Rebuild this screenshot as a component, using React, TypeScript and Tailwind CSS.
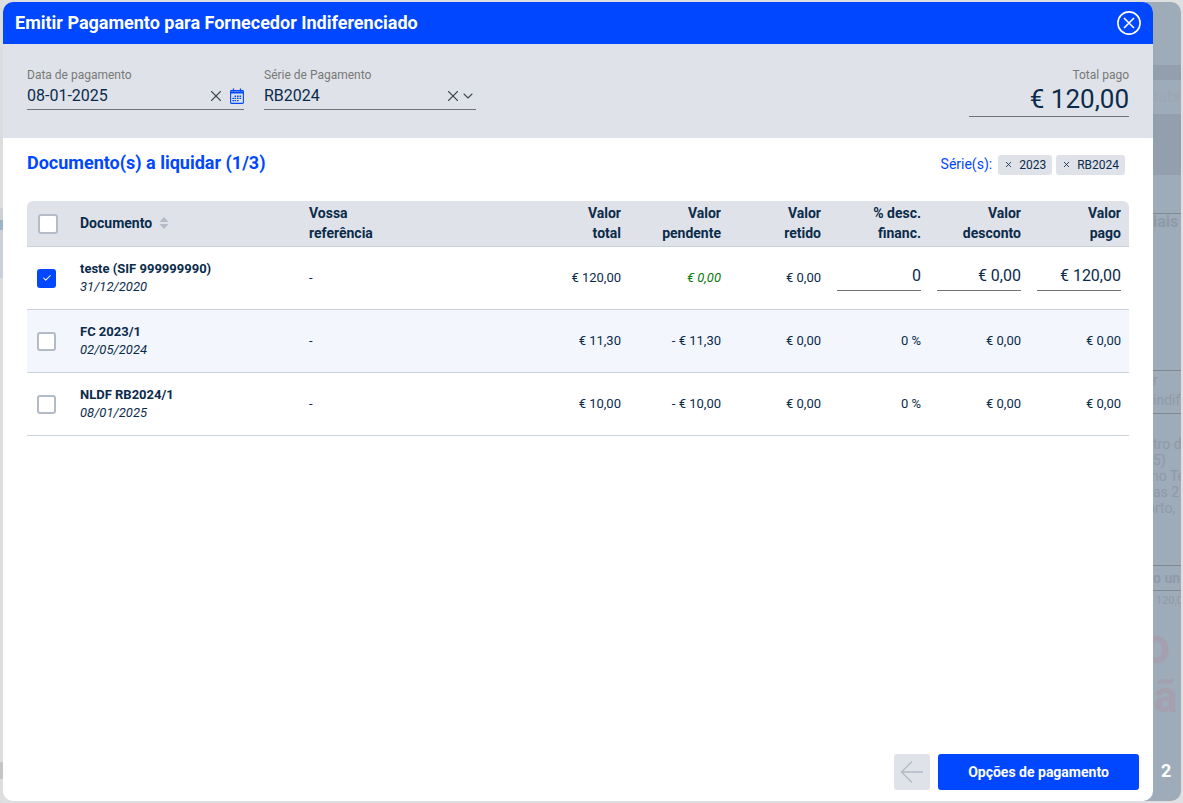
import { Check, ChevronDown, X } from 'lucide-react';

const rows = [
  { doc: 'teste (SIF 999999990)', date: '31/12/2020', total: '€ 120,00', pendente: '€ 0,00', retido: '€ 0,00', desc: '0', descVal: '€ 0,00', pago: '€ 120,00', active: true },
  { doc: 'FC 2023/1', date: '02/05/2024', total: '€ 11,30', pendente: '- € 11,30', retido: '€ 0,00', desc: '0 %', descVal: '€ 0,00', pago: '€ 0,00', active: false },
  { doc: 'NLDF RB2024/1', date: '08/01/2025', total: '€ 10,00', pendente: '- € 10,00', retido: '€ 0,00', desc: '0 %', descVal: '€ 0,00', pago: '€ 0,00', active: false },
];

const gridCols = 'grid grid-cols-[53px_229px_220px_100px_100px_100px_100px_100px_100px]';

function CalendarIcon() {
  return (
    <svg width="14" height="16" viewBox="0 0 14 16" fill="none" stroke="#0047ff" strokeWidth="1.1">
      <rect x="0.6" y="2.6" width="12.8" height="12.8" rx="0.8" />
      <path d="M0.6 4.6h12.8" strokeWidth="2" />
      <path d="M3.5 .6v3M10.5 .6v3" strokeWidth="1.3" />
      <path d="M4.5 8.2h1.6M7 8.2h1.6M9.5 8.2h1.6M2.4 10.4h1.6M4.5 10.4h1.6M7 10.4h1.6M9.5 10.4h1.6M2.4 12.6h1.6M4.5 12.6h1.6M7 12.6h1.6" strokeWidth="1.4" />
    </svg>
  );
}

function SortIcon() {
  return (
    <svg width="10" height="12" viewBox="0 0 10 12" fill="#b4bac6">
      <path d="M5 0l4.5 5H.5zM5 12L.5 7h9z" />
    </svg>
  );
}

function CloseIcon() {
  return (
    <svg width="24" height="24" viewBox="0 0 24 24" fill="none" stroke="#ffffff" strokeWidth="1.6">
      <circle cx="12" cy="12" r="11.1" />
      <path d="M7 7l10 10M17 7L7 17" />
    </svg>
  );
}

function Field({ label, value, width, children }: { label: string; value: string; width: string; children: React.ReactNode }) {
  return (
    <div className={`flex flex-col ${width}`}>
      <span className="text-[12px] leading-[14px] text-[#787878]">{label}</span>
      <div className="mt-[3px] flex h-[25px] items-center justify-between border-b border-[#6f7479] pb-[2px] text-[16px] text-[#0b2b4b]">
        <span>{value}</span>
        <span className="flex items-center gap-[1px]">{children}</span>
      </div>
    </div>
  );
}

function Chip({ label }: { label: string }) {
  return (
    <span className="flex h-[20px] items-center gap-[6px] rounded-[3px] bg-[#dfe3e9] px-[6px] text-[12px] text-[#0b2b4b]">
      <X size={9} strokeWidth={2.2} />
      {label}
    </span>
  );
}

function Money({ value }: { value: string }) {
  return (
    <div className="flex h-[27px] w-[84px] items-center justify-end border-b border-[#6f7479] pb-[1px] text-[16px] text-[#0b2b4b]">
      {value}
    </div>
  );
}

function HeadCell({ children }: { children: React.ReactNode }) {
  return <div className="flex items-center justify-end pb-[2px] pr-[8px] text-right">{children}</div>;
}

function NumCell({ children, className = '' }: { children: React.ReactNode; className?: string }) {
  return <div className={`flex items-center justify-end pr-[8px] ${className}`}>{children}</div>;
}

function Box({ checked, head }: { checked?: boolean; head?: boolean }) {
  if (checked) {
    return (
      <span className="flex h-[19px] w-[19px] items-center justify-center rounded-[3px] bg-[#0047ff] text-white">
        <Check size={10} strokeWidth={2.5} />
      </span>
    );
  }
  return <span className={`rounded-[3px] border-2 border-[#b3bbc6] bg-white ${head ? 'h-[20px] w-[20px]' : 'h-[19px] w-[19px]'}`} />;
}

// Faint page behind the dimmed overlay, on the right of the modal
function BehindStrip() {
  return (
    <div className="z-0 -ml-[12px] mt-[2px] flex h-[799px] w-[40px] flex-col overflow-hidden rounded-r-[10px] bg-[#9eabb8] pl-[12px] font-['Roboto',sans-serif] text-[14px] whitespace-nowrap text-[#8e9aa8]">
      <div className="mt-[63px] h-[15px] shrink-0 bg-[#939fad]" />
      <div className="flex h-[34px] shrink-0 items-center text-[16px] text-[#9aa7b4]">tabili</div>
      <div className="h-[61px] shrink-0 bg-[#939fad]" />
      <div className="mt-[38px] h-[1px] shrink-0 bg-[#7f8995]" />
      <div className="h-[16px] shrink-0 text-[16px] font-bold leading-[16px]">iais</div>
      <div className="mt-[140px] h-[1px] shrink-0 bg-[#7f8995]" />
      <div className="h-[19px] shrink-0 leading-[19px]">r</div>
      <div className="h-[23px] shrink-0 leading-[21px] text-[#8e9aa8]">indife</div>
      <div className="h-[1px] shrink-0 bg-[#7f8995]" />
      <div className="mt-[22px] flex shrink-0 flex-col text-[14px] leading-[16px]">
        <span>tro de</span>
        <span>5)</span>
        <span className="-ml-[2px]">no Te</span>
        <span>as 2</span>
        <span className="-ml-[6px]">orto,</span>
      </div>
      <div className="mt-[49px] h-[1px] shrink-0 bg-[#7f8995]" />
      <div className="h-[24px] shrink-0 text-[14px] font-bold leading-[24px]">o un</div>
      <div className="h-[1px] shrink-0 bg-[#7f8995]" />
      <div className="h-[20px] shrink-0 pl-[3px] text-[11px] leading-[20px]">120,0</div>
      <div className="flex h-[120px] shrink-0 flex-col font-bold text-[#a5a0ae]">
        <span className="-ml-[11px] mt-[10px] text-[50px] leading-[50px]">o</span>
        <span className="pl-[1px] text-[44px] leading-[52px]">ã</span>
      </div>
      <div className="mt-[30px] pl-[8px] text-[18px] font-bold leading-[20px] text-white">2</div>
    </div>
  );
}

export default function App() {
  return (
    <div className="flex h-[803px] w-[1183px] overflow-hidden bg-[#dedfe0] font-['Roboto',sans-serif]">
      {/* left sliver of the page behind */}
      <div className="flex h-full w-[3px] shrink-0 flex-col bg-[#dcdddf]">
        <div className="mt-[208px] h-[12px] bg-[#cdd0d4]" />
        <div className="h-[10px] bg-[#9db3c6]" />
        <div className="h-[12px] bg-[#cdd0d4]" />
        <div className="h-[36px] bg-[#c7d0de]" />
        <div className="mt-[484px] h-[17px] bg-[#c4c5c6]" />
      </div>

      <div className="z-10 mt-[2px] flex h-[799px] w-[1150px] shrink-0 flex-col overflow-hidden rounded-[10px] bg-white">
        <header className="flex h-[42px] shrink-0 items-center justify-between bg-[#0047ff] pl-[12px] pr-[12px] text-white">
          <h1 className="pb-[2px] text-[18px] font-bold">Emitir Pagamento para Fornecedor Indiferenciado</h1>
          <CloseIcon />
        </header>

        <div className="flex h-[94px] shrink-0 items-start bg-[#dfe3e9] pl-[24px] pr-[24px] pt-[24px]">
          <Field label="Data de pagamento" value="08-01-2025" width="w-[217px]">
            <X size={18} strokeWidth={1.5} className="mr-[4px] text-[#3f4a56]" />
            <CalendarIcon />
          </Field>
          <div className="ml-[20px]">
            <Field label="Série de Pagamento" value="RB2024" width="w-[212px]">
              <X size={18} strokeWidth={1.5} className="-mr-[3px] text-[#3f4a56]" />
              <ChevronDown size={16} strokeWidth={1.6} className="text-[#3f4a56]" />
            </Field>
          </div>
          <div className="ml-auto flex w-[160px] flex-col items-end">
            <span className="text-[12px] leading-[14px] text-[#787878]">Total pago</span>
            <div className="flex h-[35px] w-full items-center justify-end border-b border-[#6f7479] text-[26px] text-[#0b2b4b]">€ 120,00</div>
          </div>
        </div>

        <div className="flex min-h-0 flex-1 flex-col pl-[24px] pr-[24px]">
          <div className="flex h-[63px] shrink-0 items-start justify-between pt-[14px]">
            <h2 className="text-[18px] font-bold leading-[22px] text-[#0047ff]">Documento(s) a liquidar (1/3)</h2>
            <div className="mr-[4px] flex items-center gap-[4px] pt-[2px]">
              <span className="mr-[2px] text-[14px] text-[#0047ff]">Série(s):</span>
              <Chip label="2023" />
              <Chip label="RB2024" />
            </div>
          </div>

          <div className={`${gridCols} h-[46px] shrink-0 rounded-t-[6px] border-b border-[#ccd2da] bg-[#dfe3e9] text-[14px] font-bold leading-[20px] text-[#0b2b4b]`}>
            <div className="flex items-center pl-[11px]">
              <Box head />
            </div>
            <div className="flex items-center gap-[7px] pb-[2px]">
              Documento <SortIcon />
            </div>
            <div className="flex flex-col justify-center pb-[2px]">
              <span>Vossa</span>
              <span>referência</span>
            </div>
            <HeadCell>Valor<br />total</HeadCell>
            <HeadCell>Valor<br />pendente</HeadCell>
            <HeadCell>Valor<br />retido</HeadCell>
            <HeadCell>% desc.<br />financ.</HeadCell>
            <HeadCell>Valor<br />desconto</HeadCell>
            <HeadCell>Valor<br />pago</HeadCell>
          </div>

          {rows.map((row, i) => (
            <div
              key={row.doc}
              className={`${gridCols} h-[63px] shrink-0 border-b border-[#ccd2da] text-[13px] text-[#0b2b4b] ${i === 1 ? 'bg-[#f3f7fd]' : ''}`}
            >
              <div className="flex items-center pl-[10px]">
                <Box checked={row.active} />
              </div>
              <div className="flex flex-col justify-center">
                <span className="text-[13px] font-bold leading-[18px]">{row.doc}</span>
                <span className="text-[13px] italic leading-[18px]">{row.date}</span>
              </div>
              <div className="flex items-center">-</div>
              <NumCell>{row.total}</NumCell>
              <NumCell className={row.active ? 'italic text-[#0a7a0a]' : ''}>{row.pendente}</NumCell>
              <NumCell>{row.retido}</NumCell>
              {row.active ? (
                <>
                  <NumCell className="pb-[2px]"><Money value={row.desc} /></NumCell>
                  <NumCell className="pb-[2px]"><Money value={row.descVal} /></NumCell>
                  <NumCell className="pb-[2px]"><Money value={row.pago} /></NumCell>
                </>
              ) : (
                <>
                  <NumCell>{row.desc}</NumCell>
                  <NumCell>{row.descVal}</NumCell>
                  <NumCell>{row.pago}</NumCell>
                </>
              )}
            </div>
          ))}

          <div className="mb-[11px] mr-[-10px] mt-auto flex justify-end gap-[8px]">
            <span className="flex h-[36px] w-[36px] items-center justify-center rounded-[3px] bg-[#dfe3e9]">
              <svg width="24" height="24" viewBox="0 0 24 24" fill="none" stroke="#b4bac6" strokeWidth="1.4">
                <path d="M23 12H1.5M12 1.5L1.5 12 12 22.5" />
              </svg>
            </span>
            <button className="h-[36px] w-[201px] rounded-[3px] bg-[#0047ff] text-[14px] font-bold text-white">Opções de pagamento</button>
          </div>
        </div>
      </div>

      <BehindStrip />
    </div>
  );
}
